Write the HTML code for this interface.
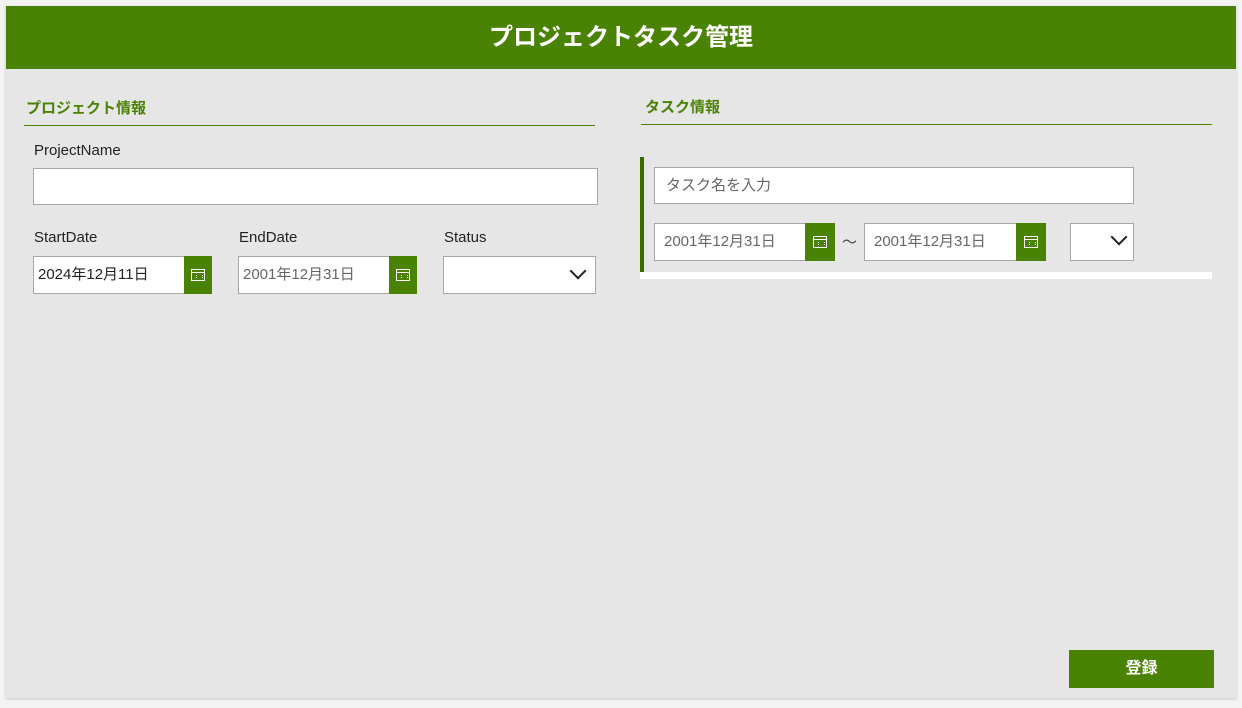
<!DOCTYPE html>
<html><head><meta charset="utf-8"><style>
*{box-sizing:border-box;margin:0;padding:0}
body{width:1242px;height:708px;background:#f3f3f3;font-family:"Liberation Sans","Noto Sans CJK JP",sans-serif;position:relative;overflow:hidden}
.a{position:absolute}
#panel{left:6px;top:6px;width:1230px;height:692px;background:#e6e6e6;box-shadow:0 1px 3px rgba(0,0,0,.2)}
#hdr{left:6px;top:6px;width:1230px;height:63px;background:#4a8203;color:#fff;font-weight:bold;font-size:24px;text-align:center;line-height:63px}
.h{color:#4a8203;font-weight:bold;font-size:15px}
.line{height:1px;background:#4a8203}
.lbl{font-size:15px;color:#222}
.in{background:#fff;border:1px solid #a6a6a6;font-size:15px;color:#666;line-height:36px;padding-left:9px}
.btn{background:#4a8203}
.cal{position:absolute;left:50%;top:50%;width:14px;height:12px;margin:-6px 0 0 -7px;border:1px solid #fff}
.cal:before{content:"";position:absolute;left:0;right:0;top:2px;height:1px;background:#fff}
.cal:after{content:"";position:absolute;left:4px;top:5px;width:5px;height:3px;border-left:1px dotted #fff;border-right:1px dotted #fff}
.chev{position:absolute;width:12px;height:12px;border-right:2.5px solid #222;border-bottom:2.5px solid #222;transform:rotate(45deg)}
</style></head><body>
<div class="a" id="panel"></div>
<div class="a" id="hdr">プロジェクトタスク管理</div>

<div class="a h" style="left:26px;top:97px">プロジェクト情報</div>
<div class="a line" style="left:24px;top:125px;width:571px"></div>
<div class="a lbl" style="left:34px;top:142px">ProjectName</div>
<div class="a in" style="left:33px;top:168px;width:565px;height:37px"></div>
<div class="a lbl" style="left:34px;top:229px">StartDate</div>
<div class="a lbl" style="left:239px;top:229px">EndDate</div>
<div class="a lbl" style="left:444px;top:229px">Status</div>
<div class="a in" style="left:33px;top:256px;width:179px;height:38px;color:#222;padding-left:4px">2024年12月11日</div>
<div class="a btn" style="left:184px;top:256px;width:28px;height:38px"><div class="cal"></div></div>
<div class="a in" style="left:238px;top:256px;width:179px;height:38px;padding-left:4px">2001年12月31日</div>
<div class="a btn" style="left:389px;top:256px;width:28px;height:38px"><div class="cal"></div></div>
<div class="a in" style="left:443px;top:256px;width:153px;height:38px"><div class="chev" style="left:128px;top:8px"></div></div>

<div class="a h" style="left:645px;top:96px">タスク情報</div>
<div class="a line" style="left:641px;top:124px;width:571px"></div>
<div class="a" style="left:640px;top:157px;width:4px;height:115px;background:#3a6a02"></div>
<div class="a" style="left:640px;top:272px;width:572px;height:7px;background:#fff"></div>
<div class="a in" style="left:654px;top:167px;width:480px;height:37px;padding-left:11px">タスク名を入力</div>
<div class="a in" style="left:654px;top:223px;width:181px;height:38px">2001年12月31日</div>
<div class="a btn" style="left:805px;top:223px;width:30px;height:38px"><div class="cal"></div></div>
<div class="a" style="left:842px;top:231px;font-size:15px;color:#444">～</div>
<div class="a in" style="left:864px;top:223px;width:182px;height:38px">2001年12月31日</div>
<div class="a btn" style="left:1016px;top:223px;width:30px;height:38px"><div class="cal"></div></div>
<div class="a in" style="left:1070px;top:223px;width:64px;height:38px"><div class="chev" style="left:42px;top:7px"></div></div>

<div class="a btn" style="left:1069px;top:650px;width:145px;height:38px;color:#fff;font-weight:bold;font-size:16px;text-align:center;line-height:38px">登録</div>
</body></html>
